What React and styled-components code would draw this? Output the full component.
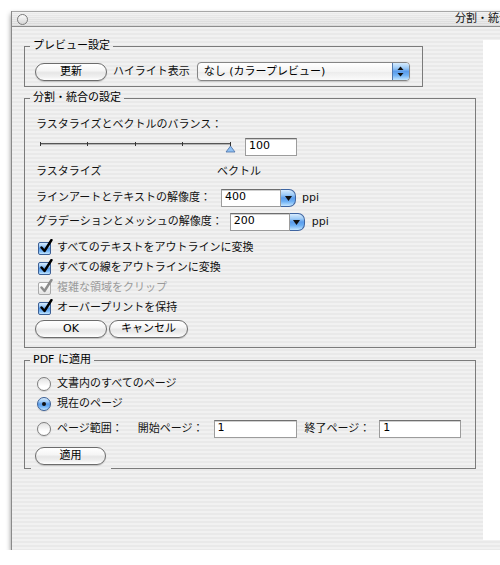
import React from "react";
import styled, { createGlobalStyle } from "styled-components";

const font = `"DejaVu Sans", "Noto Sans CJK JP", sans-serif`;

const aqua = `linear-gradient(to bottom, #d6ebfe 0%, #9ccaf6 30%, #5a9ceb 50%, #6fb1f4 72%, #c4e6ff 100%)`;

const GlobalStyle = createGlobalStyle`
  *, *::before, *::after { box-sizing: border-box; }
  html, body { margin: 0; padding: 0; background: #fff; overflow: hidden; }
  body { font-family: ${font}; font-size: 11px; color: #000; }
`;

// Fenetre
const Window = styled.div`
  margin: 11px 0 0 11px;
  width: 600px;
  height: 539px;
  display: flex;
  flex-direction: column;
  border-left: 1px solid #8a8a8a;
  background: repeating-linear-gradient(
    to bottom,
    #f1f1f1 0px,
    #f1f1f1 2px,
    #e9e9e9 2px,
    #e9e9e9 4px
  );
  box-shadow: 0 3px 5px rgba(0, 0, 0, 0.45);
`;

const TitleBar = styled.div`
  height: 16px;
  flex: none;
  display: flex;
  align-items: center;
  padding-left: 5px;
  border-top: 1px solid #a6a6a6;
  border-bottom: 1px solid #8c8c8c;
  background: repeating-linear-gradient(
      to bottom,
      rgba(255, 255, 255, 0.35) 0px,
      rgba(255, 255, 255, 0.35) 1px,
      transparent 1px,
      transparent 2px
    ),
    linear-gradient(to bottom, #ececec, #d9d9d9);
`;

const CloseDot = styled.span`
  width: 11px;
  height: 11px;
  border-radius: 50%;
  border: 1px solid #7a7a7a;
  background: linear-gradient(to bottom, #fbfbfb, #d6d6d6);
  flex: none;
`;

const Title = styled.span`
  margin-left: 427px;
  font: 11px/14px ${font};
  white-space: nowrap;
  color: #111;
`;

const Body = styled.div`
  flex: 1;
  display: flex;
  min-height: 0;
`;

const Pane = styled.div`
  width: 471px;
  flex: none;
  padding: 12px 0 0 12px;
  display: flex;
  flex-direction: column;
  align-items: flex-start;
`;

const Preview = styled.div`
  flex: 1;
  background: #fff;
  margin: 13px 0 10px 0;
`;

// Groupes
const Group = styled.fieldset`
  position: relative;
  margin: ${(p) => p.$mt || 0}px 0 0 0;
  padding: 0;
  width: ${(p) => p.$w}px;
  min-inline-size: 0;
  border: 1px solid #7b7b7b;
  ${(p) =>
    p.$gap &&
    `
    border-bottom: none;
    &::after {
      content: "";
      position: absolute;
      left: -1px;
      right: -1px;
      bottom: -1px;
      height: 1px;
      background: linear-gradient(to right, #7b7b7b 0 7px, transparent 7px 87px, #7b7b7b 87px);
    }
  `}
`;

const Legend = styled.legend`
  margin-left: 5px;
  padding: 0 3px;
  font: 11px/14px ${font};
`;

const Inner = styled.div`
  display: flex;
  flex-direction: column;
  align-items: flex-start;
  padding: ${(p) => p.$pad};
`;

const Row = styled.div`
  display: flex;
  align-items: center;
  gap: ${(p) => p.$gap || 0}px;
  height: ${(p) => p.$h || 14}px;
  margin-top: ${(p) => p.$mt || 0}px;
  margin-left: ${(p) => p.$ml || 0}px;
`;

const Label = styled.span`
  font: 11px/14px ${font};
  white-space: nowrap;
  color: ${(p) => (p.$disabled ? "#9b9b9b" : "#111")};
  width: ${(p) => (p.$w ? `${p.$w}px` : "auto")};
  margin-left: ${(p) => p.$ml || 0}px;
  flex: none;
`;

// Boutons
const PushButton = styled.button`
  width: ${(p) => p.$w}px;
  height: 18px;
  padding: 0;
  border: 1px solid #6c6c6c;
  border-radius: 9px;
  background: linear-gradient(
    to bottom,
    #ffffff 0%,
    #f6f6f6 40%,
    #e6e6e6 55%,
    #f0f0f0 80%,
    #ffffff 100%
  );
  box-shadow: 0 1px 1px rgba(0, 0, 0, 0.18);
  font: 11px/16px ${font};
  color: #000;
  text-align: center;
  flex: none;
`;

const Popup = styled.div`
  display: flex;
  width: 213px;
  height: 19px;
  margin-left: 1px;
  border: 1px solid #858585;
  border-radius: 4px;
  overflow: hidden;
  background: linear-gradient(to bottom, #ffffff, #f4f4f4 50%, #ebebeb 51%, #fbfbfb);
  box-shadow: 0 1px 1px rgba(0, 0, 0, 0.15);
`;

const PopupText = styled.span`
  flex: 1;
  padding-left: 6px;
  font: 11px/17px ${font};
  white-space: nowrap;
`;

const BlueCap = styled.span`
  width: ${(p) => p.$w || 17}px;
  flex: none;
  display: flex;
  align-items: center;
  justify-content: center;
  background: ${aqua};
  border-left: 1px solid #4f77ad;
`;

const Field = styled.div`
  width: ${(p) => p.$w}px;
  height: 18px;
  flex: none;
  padding: 0 0 0 3px;
  margin-left: ${(p) => p.$ml || 0}px;
  background: #fff;
  border: 1px solid #9c9c9c;
  border-top-color: #6f6f6f;
  box-shadow: inset 0 1px 0 #cfcfcf;
  font: 11px/14px ${font};
`;

const Combo = styled.div`
  display: flex;
  flex: none;
`;

const ComboButton = styled.span`
  width: 15px;
  height: 18px;
  display: flex;
  align-items: center;
  justify-content: center;
  background: ${aqua};
  border: 1px solid #3e64a0;
  border-left: none;
  border-radius: 0 7px 7px 0;
`;

const CheckBox = styled.span`
  position: relative;
  width: 13px;
  height: 13px;
  flex: none;
  border: 1px solid ${(p) => (p.$disabled ? "#a9a9a9" : "#3b5f95")};
  border-radius: 2px;
  background: ${(p) =>
    p.$disabled ? "linear-gradient(to bottom, #ffffff, #e4e4e4)" : aqua};

  svg {
    position: absolute;
    left: 1px;
    top: -4px;
  }
`;

const Radio = styled.span`
  width: 14px;
  height: 14px;
  flex: none;
  border-radius: 50%;
  border: 1px solid ${(p) => (p.$on ? "#3b5f95" : "#7e7e7e")};
  background: ${(p) =>
    p.$on ? aqua : "linear-gradient(to bottom, #e2e2e2, #ffffff 70%)"};
  box-shadow: 0 1px 1px rgba(0, 0, 0, 0.12);
  display: flex;
  align-items: center;
  justify-content: center;

  &::after {
    content: "";
    display: ${(p) => (p.$on ? "block" : "none")};
    width: 4px;
    height: 4px;
    border-radius: 50%;
    background: #111;
  }
`;

const UpDown = () => (
  <svg width="7" height="11" viewBox="0 0 7 11">
    <path d="M3.5 0.5 L6.5 4 L0.5 4 Z" fill="#111" />
    <path d="M0.5 7 L6.5 7 L3.5 10.5 Z" fill="#111" />
  </svg>
);

const Down = () => (
  <svg width="7" height="5" viewBox="0 0 7 5">
    <path d="M0 0 L7 0 L3.5 5 Z" fill="#111" />
  </svg>
);

const Check = ({ color }) => (
  <svg width="13" height="14" viewBox="0 0 13 14">
    <path
      d="M1.5 8.5 L4.5 12 L11.5 1"
      fill="none"
      stroke={color}
      strokeWidth="2.4"
      strokeLinecap="round"
      strokeLinejoin="round"
    />
  </svg>
);

const Slider = () => {
  const ticks = [4.5, 51.5, 99.5, 146.5, 194.5];
  return (
    <svg width="203" height="18" viewBox="0 0 203 18">
      <line x1="4" y1="5.5" x2="195" y2="5.5" stroke="#555" strokeWidth="1" />
      <line x1="4" y1="6.5" x2="195" y2="6.5" stroke="#b5b5b5" strokeWidth="1" />
      {ticks.map((x) => (
        <line key={x} x1={x} y1="4" x2={x} y2="8" stroke="#333" strokeWidth="1" />
      ))}
      <path d="M194.5 8 L199 14 L190 14 Z" fill="#8fc0f3" stroke="#4a6fa5" strokeWidth="0.8" />
    </svg>
  );
};

const checks = [
  { label: "すべてのテキストをアウトラインに変換" },
  { label: "すべての線をアウトラインに変換" },
  { label: "複雑な領域をクリップ", disabled: true },
  { label: "オーバープリントを保持" },
];

export default function App() {
  return (
    <>
      <GlobalStyle />
      <Window>
        <TitleBar>
          <CloseDot />
          <Title>分割・統合プレビュー</Title>
        </TitleBar>
        <Body>
          <Pane>
            <Group $w={399}>
              <Legend>プレビュー設定</Legend>
              <Inner $pad="9px 0 5px 10px">
                <Row $h={19} $gap={6}>
                  <PushButton $w={72}>更新</PushButton>
                  <Label>ハイライト表示</Label>
                  <Popup>
                    <PopupText>なし (カラープレビュー)</PopupText>
                    <BlueCap>
                      <UpDown />
                    </BlueCap>
                  </Popup>
                </Row>
              </Inner>
            </Group>

            <Group $w={452} $mt={4}>
              <Legend>分割・統合の設定</Legend>
              <Inner $pad="13px 0 9px 11px">
                <Label>ラスタライズとベクトルのバランス：</Label>
                <Row $h={18} $mt={6} $gap={6}>
                  <Slider />
                  <Field $w={52}>100</Field>
                </Row>
                <Row $mt={9}>
                  <Label $w={181}>ラスタライズ</Label>
                  <Label>ベクトル</Label>
                </Row>
                <Row $h={18} $mt={10} $gap={10}>
                  <Label>ラインアートとテキストの解像度：</Label>
                  <Combo>
                    <Field $w={60}>400</Field>
                    <ComboButton>
                      <Down />
                    </ComboButton>
                  </Combo>
                  <Label $ml={-4}>ppi</Label>
                </Row>
                <Row $h={18} $mt={6} $gap={7}>
                  <Label>グラデーションとメッシュの解像度：</Label>
                  <Combo>
                    <Field $w={60}>200</Field>
                    <ComboButton>
                      <Down />
                    </ComboButton>
                  </Combo>
                  <Label>ppi</Label>
                </Row>
                {checks.map((c, i) => (
                  <Row key={c.label} $h={20} $mt={i === 0 ? 7 : 0} $ml={2} $gap={6}>
                    <CheckBox $disabled={c.disabled}>
                      <Check color={c.disabled ? "#8c8c8c" : "#000"} />
                    </CheckBox>
                    <Label $disabled={c.disabled}>{c.label}</Label>
                  </Row>
                ))}
                <Row $h={18} $mt={2} $ml={-1} $gap={2}>
                  <PushButton $w={72}>OK</PushButton>
                  <PushButton $w={79}>キャンセル</PushButton>
                </Row>
              </Inner>
            </Group>

            <Group $w={452} $mt={5} $gap>
              <Legend>PDF に適用</Legend>
              <Inner $pad="7px 0 3px 11px">
                <Row $h={20} $ml={1} $gap={6}>
                  <Radio />
                  <Label>文書内のすべてのページ</Label>
                </Row>
                <Row $h={20} $ml={1} $gap={6}>
                  <Radio $on />
                  <Label>現在のページ</Label>
                </Row>
                <Row $h={18} $mt={6} $ml={1} $gap={6}>
                  <Radio />
                  <Label>ページ範囲：</Label>
                  <Label $ml={9}>開始ページ：</Label>
                  <Field $w={83} $ml={4}>1</Field>
                  <Label $ml={2}>終了ページ：</Label>
                  <Field $w={82} $ml={3}>1</Field>
                </Row>
                <Row $h={18} $mt={9} $ml={-1}>
                  <PushButton $w={71}>適用</PushButton>
                </Row>
              </Inner>
            </Group>
          </Pane>
          <Preview />
        </Body>
      </Window>
    </>
  );
}
